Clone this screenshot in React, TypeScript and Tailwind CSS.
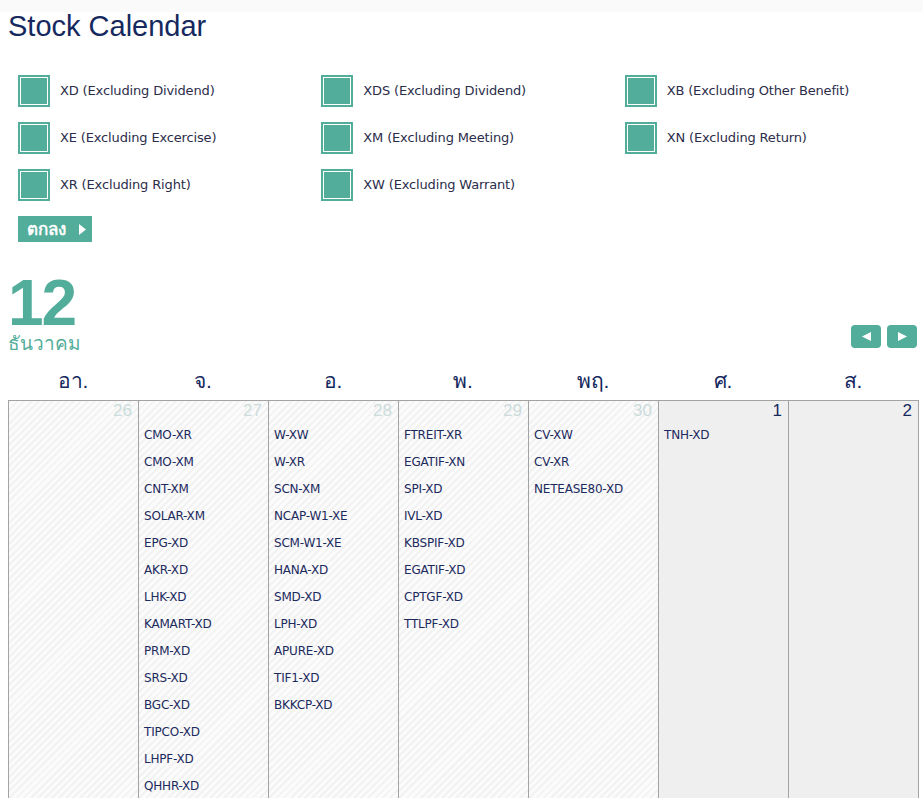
import React from 'react';

const filters = [
  'XD (Excluding Dividend)',
  'XDS (Excluding Dividend)',
  'XB (Excluding Other Benefit)',
  'XE (Excluding Excercise)',
  'XM (Excluding Meeting)',
  'XN (Excluding Return)',
  'XR (Excluding Right)',
  'XW (Excluding Warrant)',
];

const days = ['อา.', 'จ.', 'อ.', 'พ.', 'พฤ.', 'ศ.', 'ส.'];

const week = [
  { day: 26, out: true, items: [] as string[] },
  {
    day: 27,
    out: true,
    items: ['CMO-XR', 'CMO-XM', 'CNT-XM', 'SOLAR-XM', 'EPG-XD', 'AKR-XD', 'LHK-XD', 'KAMART-XD', 'PRM-XD', 'SRS-XD', 'BGC-XD', 'TIPCO-XD', 'LHPF-XD', 'QHHR-XD'],
  },
  {
    day: 28,
    out: true,
    items: ['W-XW', 'W-XR', 'SCN-XM', 'NCAP-W1-XE', 'SCM-W1-XE', 'HANA-XD', 'SMD-XD', 'LPH-XD', 'APURE-XD', 'TIF1-XD', 'BKKCP-XD'],
  },
  {
    day: 29,
    out: true,
    items: ['FTREIT-XR', 'EGATIF-XN', 'SPI-XD', 'IVL-XD', 'KBSPIF-XD', 'EGATIF-XD', 'CPTGF-XD', 'TTLPF-XD'],
  },
  { day: 30, out: true, items: ['CV-XW', 'CV-XR', 'NETEASE80-XD'] },
  { day: 1, out: false, items: ['TNH-XD'] },
  { day: 2, out: false, items: [] as string[] },
];

const font = "font-['DejaVu_Sans','Noto_Sans',sans-serif]";

export default function App() {
  return (
    <div className="min-h-screen bg-white font-['Liberation_Sans','Noto_Sans',sans-serif]">
      <div className="h-3 bg-[#fafafa]" />
      <div className="pl-2 pr-[5px]">
        <h1 className="text-[29px] leading-[28px] text-[#15295e]">Stock Calendar</h1>

        {/* Filters */}
        <div className="grid grid-cols-3 gap-y-[15px] mt-[35px] w-[910px]">
          {filters.map((f) => (
            <label key={f} className="flex items-center gap-[10px] pl-[10px] cursor-pointer">
              <div className="w-8 h-8 bg-[#52ad9a] p-[2px]">
                <div className="w-full h-full border border-white" />
              </div>
              <span className={`${font} text-[13px] text-[#2b2d4a] tracking-[-0.15px]`}>{f}</span>
            </label>
          ))}
        </div>

        <div className="pl-[10px] mt-[15px]">
          <button className="w-[74px] h-[26px] bg-[#52ad9a] text-white flex items-center pl-[9px] gap-[13px]">
            <span className="text-[17px] leading-none font-semibold">ตกลง</span>
            <svg width="7" height="11" viewBox="0 0 7 11">
              <path d="M0 0 L7 5.5 L0 11 Z" fill="white" />
            </svg>
          </button>
        </div>

        {/* Month header */}
        <div className="flex items-end justify-between mt-[37px]">
          <div className="text-[#52ad9a]">
            <div className="text-[64px] leading-[48px] font-bold tracking-[-2px]">12</div>
            <div className="text-[19px] leading-[28px] mt-[3px] mb-[3px]">ธันวาคม</div>
          </div>
          <div className="flex gap-[6px] mb-[13px] mr-[1px]">
            <button className="w-[30px] h-[23px] rounded bg-[#52ad9a] flex items-center justify-center">
              <svg width="9" height="9" viewBox="0 0 9 9">
                <path d="M9 0 L0 4.5 L9 9 Z" fill="white" />
              </svg>
            </button>
            <button className="w-[30px] h-[23px] rounded bg-[#52ad9a] flex items-center justify-center">
              <svg width="9" height="9" viewBox="0 0 9 9">
                <path d="M0 0 L9 4.5 L0 9 Z" fill="white" />
              </svg>
            </button>
          </div>
        </div>

        {/* Calendar */}
        <div className="grid grid-cols-7 w-[910px] mt-[5px]">
          {days.map((d) => (
            <div key={d} className="h-[34px] pb-[4px] flex items-center justify-center text-[21px] text-[#15295e]">
              {d}
            </div>
          ))}
        </div>
        <div className="grid grid-cols-7 w-[911px] border-t border-l border-[#a3a3a3]">
          {week.map((c) => (
            <div
              key={c.day}
              className={`min-h-[420px] border-r border-b border-[#a3a3a3] ${
                c.out
                  ? 'bg-[repeating-linear-gradient(135deg,#f2f2f2_0px,#f2f2f2_2px,#fbfbfb_2px,#fbfbfb_5px)]'
                  : 'bg-[#efefef]'
              }`}
            >
              <div
                className={`text-right pr-[6px] text-[17px] leading-[20px] ${
                  c.out ? 'text-[#cbdcdb]' : 'text-[#15295e]'
                }`}
              >
                {c.day}
              </div>
              <ul className="pl-[5px] pt-[1px]">
                {c.items.map((it) => (
                  <li key={it} className={`${font} text-[12px] leading-[27px] text-[#1c2a5e] tracking-[-0.2px]`}>
                    {it}
                  </li>
                ))}
              </ul>
            </div>
          ))}
        </div>
      </div>
    </div>
  );
}
